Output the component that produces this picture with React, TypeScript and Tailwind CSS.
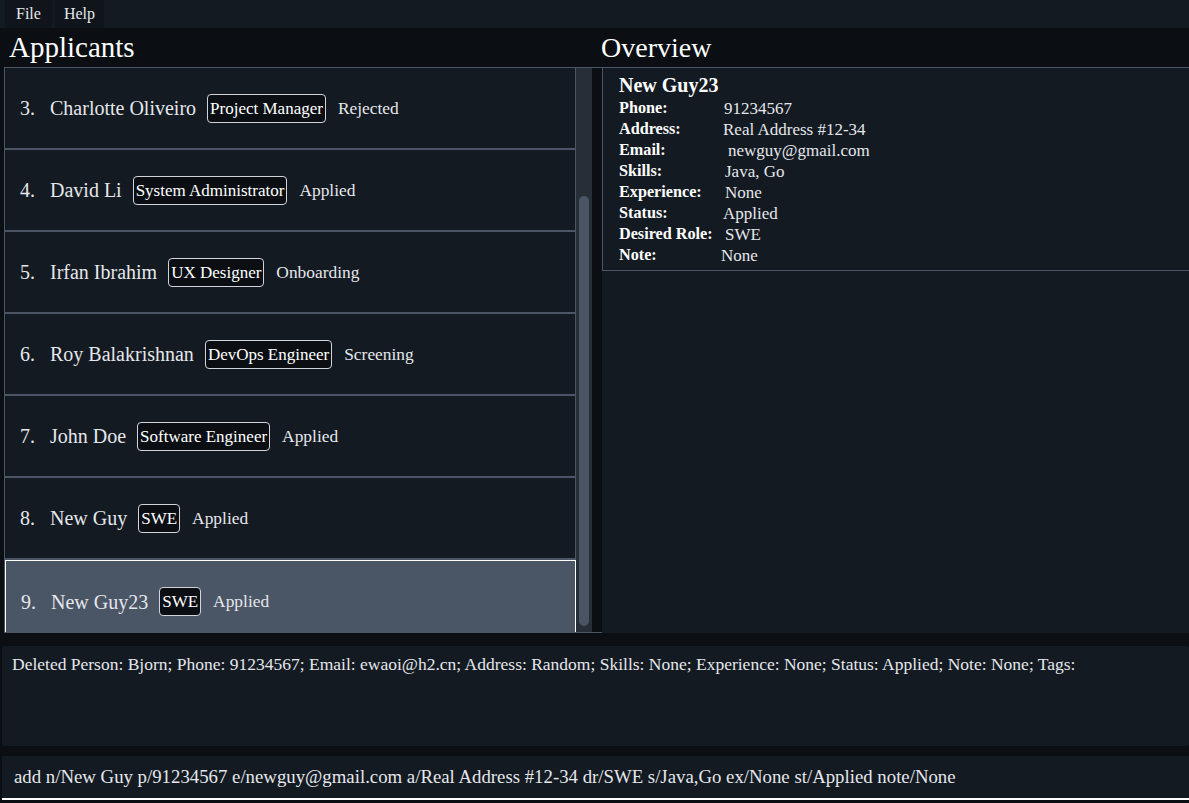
import React from 'react'

const applicants = [
  { n: 3, name: 'Charlotte Oliveiro', role: 'Project Manager', status: 'Rejected' },
  { n: 4, name: 'David Li', role: 'System Administrator', status: 'Applied' },
  { n: 5, name: 'Irfan Ibrahim', role: 'UX Designer', status: 'Onboarding' },
  { n: 6, name: 'Roy Balakrishnan', role: 'DevOps Engineer', status: 'Screening' },
  { n: 7, name: 'John Doe', role: 'Software Engineer', status: 'Applied' },
  { n: 8, name: 'New Guy', role: 'SWE', status: 'Applied' },
  { n: 9, name: 'New Guy23', role: 'SWE', status: 'Applied', selected: true },
]

const details = [
  { label: 'Phone:', value: '91234567', pad: 'pl-[1px]' },
  { label: 'Address:', value: 'Real Address #12-34', pad: 'pl-0' },
  { label: 'Email:', value: 'newguy@gmail.com', pad: 'pl-[5px]' },
  { label: 'Skills:', value: 'Java, Go', pad: 'pl-[2px]' },
  { label: 'Experience:', value: 'None', pad: 'pl-[2px]' },
  { label: 'Status:', value: 'Applied', pad: 'pl-0' },
  { label: 'Desired Role:', value: 'SWE', pad: 'pl-[2px]' },
  { label: 'Note:', value: 'None', pad: '-ml-[2px]' },
]

export default function App() {
  return (
    <div
      className="w-[1189px] h-[803px] overflow-hidden bg-[#0b0f14] text-[#e5e7eb] flex flex-col"
      style={{ fontFamily: '"Liberation Serif", "DejaVu Serif", serif' }}
    >
      {/* Menu bar */}
      <div className="h-[28px] shrink-0 bg-[#141a22] flex items-stretch pl-[5px] gap-[3px] text-[16px]">
        <div className="px-[11px] flex items-center bg-[#10151c]">File</div>
        <div className="px-[9px] flex items-center bg-[#10151c]">Help</div>
      </div>

      <div className="flex shrink-0 h-[605px]">
        {/* Applicants */}
        <div className="w-[602px] flex flex-col pl-[4px]">
          <div className="h-[39px] text-[29px] leading-[39px] pl-[5px] text-white">Applicants</div>
          <div className="h-[566px] flex border border-[#4b5563] border-r-0">
            <div className="w-[571px] overflow-hidden flex flex-col">
              {applicants.map((a) => (
                <div
                  key={a.n}
                  className={
                    a.selected
                      ? 'h-[82px] shrink-0 bg-[#4a5565] border border-white border-b-0 flex items-center pl-[15px]'
                      : 'h-[82px] shrink-0 bg-[#131a22] border-b-2 border-[#4b5563] border-r flex items-center pl-[15px]'
                  }
                >
                  <span className="text-[20px] w-[30px]">{a.n}.</span>
                  <span className="text-[20px]">{a.name}</span>
                  <span className="ml-[11px] text-[17px] leading-[23px] px-[2px] py-[2px] border border-[#d1d5db] rounded-[4px] bg-[#0b0f14] text-white">
                    {a.role}
                  </span>
                  <span className="ml-[12px] text-[17.4px] text-[#e5e7eb]">{a.status}</span>
                </div>
              ))}
            </div>
            <div className="w-[16px] bg-[#262e38] pt-[128px] pb-[6px] px-[3px] flex">
              <div className="w-full h-full rounded-full bg-[#4a5563]" />
            </div>
          </div>
        </div>

        {/* Overview */}
        <div className="flex-1 flex flex-col">
          <div className="h-[39px] text-[28px] leading-[39px] -ml-[1px] text-white">Overview</div>
          <div className="h-[566px] bg-[#131a22]">
            <div className="border border-[#4b5563] border-r-0 h-[204px] pl-[16px] pt-[4px]">
              <div className="text-[20px] font-bold text-white leading-[26px]">New Guy23</div>
              <div className="flex flex-col">
                {details.map((d) => (
                  <div key={d.label} className="flex h-[21px] items-center">
                    <span className="w-[104px] font-bold text-white text-[16.2px]">{d.label}</span>
                    <span className={`${d.pad} text-[17px]`}>{d.value}</span>
                  </div>
                ))}
              </div>
            </div>
          </div>
        </div>
      </div>

      {/* Result display */}
      <div className="mt-[13px] ml-[2px] h-[100px] shrink-0 bg-[#131a22] rounded-[3px] px-[10px] pt-[5px] text-[17.5px]">
        Deleted Person: Bjorn; Phone: 91234567; Email: ewaoi@h2.cn; Address: Random; Skills: None; Experience: None; Status: Applied; Note: None; Tags:
      </div>

      {/* Command box */}
      <div className="mt-[10px] ml-[2px] h-[44px] shrink-0 bg-[#131a22] border-b-2 border-white flex items-center px-[12px] text-[18.8px]">
        add n/New Guy p/91234567 e/newguy@gmail.com a/Real Address #12-34 dr/SWE s/Java,Go ex/None st/Applied note/None
      </div>
    </div>
  )
}
